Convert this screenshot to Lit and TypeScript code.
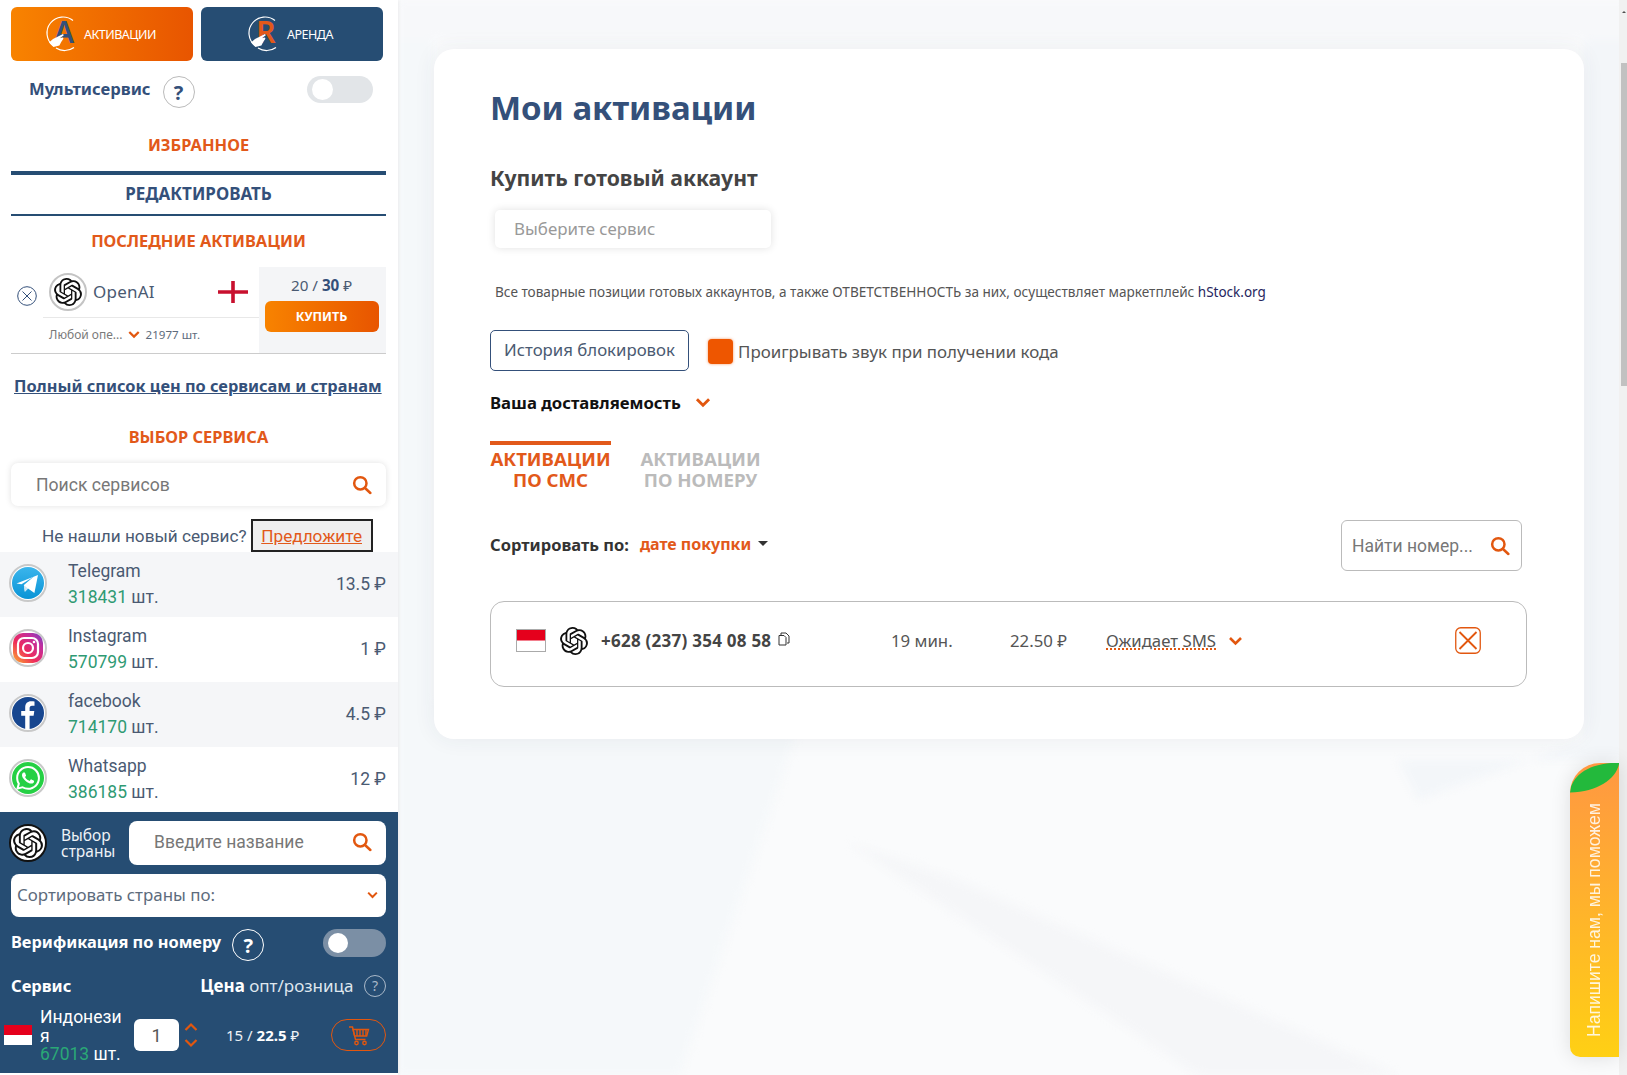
import { LitElement, html, svg, css } from "lit";
import { customElement } from "lit/decorators.js";

const gpt = svg`<path d="M22.2819 9.8211a5.9847 5.9847 0 0 0-.5157-4.9108 6.0462 6.0462 0 0 0-6.5098-2.9A6.0651 6.0651 0 0 0 4.9807 4.1818a5.9847 5.9847 0 0 0-3.9977 2.9 6.0462 6.0462 0 0 0 .7427 7.0966 5.98 5.98 0 0 0 .511 4.9107 6.051 6.051 0 0 0 6.5146 2.9001A5.9847 5.9847 0 0 0 13.2599 24a6.0557 6.0557 0 0 0 5.7718-4.2058 5.9894 5.9894 0 0 0 3.9977-2.9001 6.0557 6.0557 0 0 0-.7475-7.0729zm-9.022 12.6081a4.4755 4.4755 0 0 1-2.8764-1.0408l.1419-.0804 4.7783-2.7582a.7948.7948 0 0 0 .3927-.6813v-6.7369l2.02 1.1686a.071.071 0 0 1 .038.052v5.5826a4.504 4.504 0 0 1-4.4945 4.4944zm-9.6607-4.1254a4.4708 4.4708 0 0 1-.5346-3.0137l.142.0852 4.783 2.7582a.7712.7712 0 0 0 .7806 0l5.8428-3.3685v2.3324a.0804.0804 0 0 1-.0332.0615L9.74 19.9502a4.4992 4.4992 0 0 1-6.1408-1.6464zM2.3408 7.8956a4.485 4.485 0 0 1 2.3655-1.9728V11.6a.7664.7664 0 0 0 .3879.6765l5.8144 3.3543-2.0201 1.1685a.0757.0757 0 0 1-.071 0l-4.8303-2.7865A4.504 4.504 0 0 1 2.3408 7.872zm16.5963 3.8558L13.1038 8.364 15.1192 7.2a.0757.0757 0 0 1 .071 0l4.8303 2.7913a4.4944 4.4944 0 0 1-.6765 8.1042v-5.6772a.79.79 0 0 0-.407-.667zm2.0107-3.0231l-.142-.0852-4.7735-2.7818a.7759.7759 0 0 0-.7854 0L9.409 9.2297V6.8974a.0662.0662 0 0 1 .0284-.0615l4.8303-2.7866a4.4992 4.4992 0 0 1 6.6802 4.66zM8.3065 12.863l-2.02-1.1638a.0804.0804 0 0 1-.038-.0567V6.0742a4.4992 4.4992 0 0 1 7.3757-3.4537l-.142.0805L8.704 5.459a.7948.7948 0 0 0-.3927.6813zm1.0976-2.3654l2.602-1.4998 2.6069 1.4998v2.9994l-2.5974 1.4997-2.6067-1.4997Z"/>`;

const gptIcon = () => html`<svg viewBox="0 0 24 24" fill="#111">${gpt}</svg>`;
const search = html`<svg class="search" viewBox="0 0 24 24" fill="none" stroke="#e2570f" stroke-width="3" stroke-linecap="round"><circle cx="10" cy="10" r="7.4"/><path d="M15.6 15.6 22 21.6"/></svg>`;
const chev = () => html`<svg class="chev" viewBox="0 0 14 10" fill="none" stroke="#e2570f" stroke-width="2.6"><path d="M1.5 2 7 7.5 12.5 2"/></svg>`;
const flag = html`<svg class="flag" viewBox="0 0 30 23" preserveAspectRatio="none"><rect width="30" height="23" fill="#fff"/><rect width="30" height="11.5" fill="#e5001c"/></svg>`;
const tabLogo = (letter: string, color: string) => html`<svg class="tablogo" viewBox="0 0 34 34">
  <path d="M27 3.5A16 16 0 0 0 7 28.5" fill="none" stroke="#fff" stroke-width="1.2"/>
  <path d="M10 31A16 16 0 0 0 28 30.5" fill="none" stroke="#fff" stroke-width="1.2"/>
  <text class="tabletter" x="18" y="26" text-anchor="middle" fill=${color}>${letter}</text>
  <path d="M3 25.5 7 22l3-1.5 7-3.5 .8 1.2-4 3 3.2-.6.4 1.2-2.2 3.2-1.8 3.6-6 1.4Z" fill="#fff"/>
</svg>`;

interface Svc { name: string; count: string; price: string; icon: unknown; }
const services: Svc[] = [
  { name: "Telegram", count: "318431", price: "13.5", icon: html`<svg class="svc" viewBox="0 0 38 38"><defs><linearGradient id="tg" x1="0" y1="0" x2="0" y2="1"><stop offset="0" stop-color="#3bb5ec"/><stop offset="1" stop-color="#0a94d6"/></linearGradient></defs><circle cx="19" cy="19" r="18" fill="#fff" stroke="#c9c9c9" stroke-width="2"/><circle cx="19" cy="19" r="16" fill="url(#tg)"/><path d="M7.5 19.5 29 11l-3.6 18-6.4-4.6-3.2 3-.9-6.4 10-8.4-12.4 7.6Z" fill="#fff"/><path d="m14.9 21.2 1 6.8 3.1-3.6Z" fill="#c9e6f5"/></svg>` },
  { name: "Instagram", count: "570799", price: "1", icon: html`<svg class="svc" viewBox="0 0 38 38"><defs><linearGradient id="ig" x1="0" y1="1" x2="1" y2="0"><stop offset="0" stop-color="#fdb32b"/><stop offset=".4" stop-color="#ee2a5c"/><stop offset=".75" stop-color="#c22f9e"/><stop offset="1" stop-color="#6a45c6"/></linearGradient></defs><circle cx="19" cy="19" r="18" fill="#fff" stroke="#c9c9c9" stroke-width="2"/><rect x="4" y="4" width="30" height="30" rx="10" fill="url(#ig)"/><rect x="9" y="9" width="20" height="20" rx="6" fill="none" stroke="#fff" stroke-width="2.2"/><circle cx="19" cy="19" r="5" fill="none" stroke="#fff" stroke-width="2.2"/><circle cx="25" cy="13" r="1.3" fill="#fff"/></svg>` },
  { name: "facebook", count: "714170", price: "4.5", icon: html`<svg class="svc" viewBox="0 0 38 38"><circle cx="19" cy="19" r="18" fill="#fff" stroke="#c9c9c9" stroke-width="2"/><circle cx="19" cy="19" r="16" fill="#17468f"/><path d="M20.6 35V21.8h4l.7-4.8h-4.7v-2.800c0-1.500.7-2.400 2.400-2.400h2.500V7.600c-.9-.1-2-.3-3.400-.3-3.600 0-5.900 2.200-5.900 6.200V17h-4v4.800h4V35Z" fill="#fff"/></svg>` },
  { name: "Whatsapp", count: "386185", price: "12", icon: html`<svg class="svc" viewBox="0 0 38 38"><circle cx="19" cy="19" r="18" fill="#fff" stroke="#c9c9c9" stroke-width="2"/><circle cx="19" cy="19" r="16" fill="#25d044"/><g transform="translate(7 7)" fill="#fff"><path d="M17.472 14.382c-.297-.149-1.758-.867-2.03-.967-.273-.099-.471-.148-.67.15-.197.297-.767.966-.94 1.164-.173.199-.347.223-.644.075-.297-.15-1.255-.463-2.39-1.475-.883-.788-1.48-1.761-1.653-2.059-.173-.297-.018-.458.13-.606.134-.133.298-.347.446-.52.149-.174.198-.298.298-.497.099-.198.05-.371-.025-.52-.075-.149-.669-1.612-.916-2.207-.242-.579-.487-.5-.669-.51-.173-.008-.371-.01-.57-.01-.198 0-.52.074-.792.372-.272.297-1.04 1.016-1.04 2.479 0 1.462 1.065 2.875 1.213 3.074.149.198 2.096 3.2 5.077 4.487.709.306 1.262.489 1.694.625.712.227 1.36.195 1.871.118.571-.085 1.758-.719 2.006-1.413.248-.694.248-1.289.173-1.413-.074-.124-.272-.198-.57-.347m-5.421 7.403h-.004a9.87 9.87 0 01-5.031-1.378l-.361-.214-3.741.982.998-3.648-.235-.374a9.86 9.86 0 01-1.51-5.26c.001-5.45 4.436-9.884 9.888-9.884 2.64 0 5.122 1.03 6.988 2.898a9.825 9.825 0 012.893 6.994c-.003 5.45-4.437 9.884-9.885 9.884m8.413-18.297A11.815 11.815 0 0012.05 0C5.495 0 .16 5.335.157 11.892c0 2.096.547 4.142 1.588 5.945L.057 24l6.305-1.654a11.882 11.882 0 005.683 1.448h.005c6.554 0 11.89-5.335 11.893-11.893a11.821 11.821 0 00-3.48-8.413Z"/></g></svg>` },
];

@customElement("app-root")
export class AppRoot extends LitElement {
  static styles = css`
    :host { display: block; width: 1627px; height: 1075px; overflow: hidden; position: relative; background: #fafbfc; color: #34507a; font-family: "Noto Sans", sans-serif; }
    * { box-sizing: border-box; }
    .page { display: flex; height: 1075px; position: relative; }

    /* background decoration */
    .bg { position: absolute; left: 398px; top: 0; width: 1229px; height: 1075px; filter: blur(4px); }

    /* sidebar */
    .side { position: relative; width: 398px; height: 1075px; background: #fff; flex: none; display: flex; flex-direction: column; box-shadow: 1px 0 3px rgba(0,0,0,.06); }
    .tabs { display: flex; gap: 8px; padding: 7px 0 0 11px; }
    .tab { width: 182px; height: 54px; border-radius: 6px; display: flex; align-items: center; color: #fff; font-size: 12.5px; letter-spacing: -.5px; }
    .tab.a { background: linear-gradient(90deg, #f88300, #e85500); padding-left: 35px; gap: 4px; }
    .tab.b { background: #264d73; padding-left: 47px; gap: 5px; }
    .tablogo { width: 34px; height: 34px; flex: none; overflow: visible; }
    .tabletter { font-family: "Noto Sans", sans-serif; font-weight: 600; font-size: 30px; letter-spacing: 0; }

    .multi { display: flex; margin: 15px 25px 0 29px; height: 32px; }
    .multi b { font-size: 16.6px; font-weight: 700; color: #34507a; line-height: 26px; }
    .q { width: 32px; height: 32px; border-radius: 50%; border: 1px solid #bbb; display: flex; align-items: center; justify-content: center; font-weight: 700; font-size: 20px; color: #34507a; margin-left: 12px; background: #fff; flex: none; }
    .tog { margin-left: auto; width: 66px; height: 27px; border-radius: 14px; background: #e2e5e8; padding: 3px 5px; }
    .tog i { display: block; width: 21px; height: 21px; border-radius: 50%; background: #fff; }

    .sect { height: 24px; line-height: 24px; text-align: center; font-weight: 700; font-size: 16.4px; color: #e2591a; width: 375px; margin-left: 11px; }
    .fav { margin-top: 25px; }
    .edit { margin: 14px 0 0 11px; width: 375px; height: 45px; border-top: 4px solid #264d73; border-bottom: 2px solid #264d73; text-align: center; font-weight: 700; font-size: 17px; color: #34507a; line-height: 38px; }
    .last { margin-top: 13px; }

    .recent { margin: 14px 0 0 11px; width: 375px; height: 87px; border-bottom: 1px solid #ccc; display: flex; }
    .rleft { flex: 1; display: flex; flex-direction: column; }
    .rtop { height: 51px; margin-left: 32px; padding-left: 6px; border-bottom: 1px solid #e8e8e8; display: flex; align-items: center; position: relative; }
    .xc { position: absolute; left: -26px; top: 19px; width: 20px; height: 20px; }
    .logo38 { width: 38px; height: 38px; border-radius: 50%; border: 2px solid #c4c4c4; background: #fff; display: flex; align-items: center; justify-content: center; flex: none; }
    .logo38 svg { width: 28px; height: 28px; }
    .rname { margin-left: 6px; font-size: 17px; color: #4a5a72; letter-spacing: .2px; padding-bottom: 2px; }
    .eng { margin-left: 63px; width: 30px; height: 22px; flex: none; }
    .rbot { display: flex; align-items: center; margin-left: 38px; height: 35px; font-size: 11.6px; color: #5d6b7c; padding-bottom: 2px; }
    .rbot .op { color: #7a7a7a; font-size: 12px; }
    .rbot .chev { margin: 0 6px 0 5px; }
    .chev { width: 12px; height: 9px; }
    .rright { width: 127px; background: #f4f5f7; display: flex; flex-direction: column; align-items: center; padding-right: 2px; }
    .rprice { height: 34px; line-height: 36px; font-size: 15.2px; color: #4a5a72; }
    .rprice b { color: #34507a; }
    .buy { width: 114px; height: 31px; border-radius: 6px; background: linear-gradient(90deg, #f88300, #e85500); color: #fff; font-weight: 700; font-size: 12.5px; display: flex; align-items: center; justify-content: center; }

    .fulllink { margin: 20px 0 0 14px; width: 372px; height: 24px; line-height: 24px; font-weight: 700; font-size: 16.35px; color: #34507a; text-decoration: underline; white-space: nowrap; }
    .choose { margin-top: 27px; }
    .sbox { margin: 14px 0 0 11px; width: 375px; height: 43px; border-radius: 7px; background: #fff; box-shadow: 0 0 6px rgba(0,0,0,.12); display: flex; align-items: center; justify-content: space-between; padding: 0 14px 0 25px; font-family: Roboto, sans-serif; font-size: 17.6px; color: #777; }
    .search { width: 20px; height: 20px; flex: none; }
    .suggest { margin: 13px 0 0 42px; height: 33px; display: flex; align-items: center; font-family: Roboto, sans-serif; font-size: 17.2px; color: #4a5a72; white-space: nowrap; }
    .sugbtn { margin-left: 4px; width: 122px; height: 33px; border: 2px solid #222; background: #efefef; color: #e2591a; text-decoration: underline; display: flex; align-items: center; justify-content: center; }

    .list { display: flex; flex-direction: column; }
    .row { height: 65px; display: flex; align-items: center; padding: 0 12px 3px 9px; font-family: Roboto, sans-serif; font-size: 17.5px; color: #4a5a72; }
    .row:nth-child(odd) { background: #f5f6f8; }
    .svc { width: 38px; height: 38px; flex: none; }
    .sinfo { margin-left: 21px; padding-top: 2px; line-height: 26px; flex: 1; }
    .sinfo em { font-style: normal; color: #2f9a73; }
    .sp { padding-top: 1px; }

    .panel { height: 261px; background: #264d73; color: #fff; display: flex; flex-direction: column; padding: 9px 12px 0 11px; }
    .p1 { display: flex; height: 44px; align-items: center; margin-left: -2px; }
    .wlogo { width: 38px; height: 38px; border-radius: 50%; background: #fff; border: 2px solid #111; box-shadow: inset 0 0 0 1px #fff; display: flex; align-items: center; justify-content: center; flex: none; }
    .wlogo svg { width: 30px; height: 30px; }
    .plabel { margin-left: 14px; font-size: 15.5px; line-height: 16px; width: 68px; color: #eef2f6; }
    .pinput { flex: 1; height: 44px; background: #fff; border-radius: 8px; display: flex; align-items: center; justify-content: space-between; padding: 0 14px 2px 25px; font-family: Roboto, sans-serif; font-size: 17.5px; color: #777; }
    .psel { margin-top: 9px; height: 43px; background: #fff; border-radius: 8px; display: flex; align-items: center; justify-content: space-between; padding: 0 8px 2px 6px; font-size: 16.9px; color: #5d6b7c; }
    .psel .chev { width: 11px; height: 8px; }
    .verify { margin-top: 12px; height: 32px; display: flex; }
    .verify b { font-size: 16.4px; line-height: 26px; font-weight: 700; }
    .verify .q { background: transparent; color: #fff; border-color: #fff; margin-left: 11px; }
    .vtog { margin-left: auto; width: 63px; height: 28px; border-radius: 14px; background: #7b8fa5; padding: 4px 5px; }
    .vtog i { display: block; width: 20px; height: 20px; border-radius: 50%; background: #fff; }
    .phead { margin-top: 12px; height: 25px; display: flex; align-items: center; font-size: 16.5px; }
    .phead b { font-weight: 700; }
    .phead .pr { margin-left: 129px; white-space: nowrap; color: #dfe6ee; font-size: 17px; }
    .phead .pr b { color: #fff; }
    .q2 { margin-left: auto; width: 22px; height: 22px; border-radius: 50%; border: 1px solid #aab9c9; color: #aab9c9; font-size: 14px; display: flex; align-items: center; justify-content: center; flex: none; }
    .prow { margin: 9px 0 0 -7px; display: flex; align-items: center; height: 56px; }
    .prow .flag { width: 28px; height: 20px; flex: none; }
    .pname { margin-left: 8px; padding-top: 2px; width: 86px; font-family: Roboto, sans-serif; font-size: 17.5px; line-height: 18.500px; word-break: break-all; color: #fff; }
    .pname em { font-style: normal; color: #2aa876; }
    .num { margin-left: 8px; width: 45px; height: 32px; border-radius: 6px; background: #fff; color: #555; font-family: Roboto, sans-serif; font-size: 18px; display: flex; align-items: center; justify-content: center; flex: none; }
    .arrows { margin-left: 5px; width: 14px; height: 32px; flex: none; }
    .pprice { margin-left: 28px; font-size: 15px; width: 105px; white-space: nowrap; color: #eef2f6; }
    .pprice b { color: #fff; }
    .cart { width: 55px; height: 32px; border: 1.5px solid #e2570f; border-radius: 16px; display: flex; align-items: center; justify-content: center; flex: none; }
    .cart svg { width: 22px; height: 21px; }

    /* main */
    .main { flex: 1; position: relative; padding: 49px 35px 0 36px; }
    .card { height: 690px; background: #fff; border-radius: 20px; box-shadow: 0 0 22px rgba(40,60,90,.07); padding: 37px 57px 0 56px; display: flex; flex-direction: column; }
    h1 { margin: 0; height: 44px; line-height: 44px; font-size: 33px; font-weight: 700; color: #34507a; }
    h2 { margin: 34px 0 0; height: 28px; line-height: 28px; font-size: 21.2px; font-weight: 700; color: #444; }
    .acc { margin: 18px 0 0 5px; width: 276px; height: 38px; border-radius: 5px; background: #fff; box-shadow: 0 0 8px rgba(0,0,0,.12); padding: 0 0 2px 19px; display: flex; align-items: center; font-size: 16.9px; color: #999; }
    .note { margin: 34px 0 0 5px; height: 20px; line-height: 20px; font-size: 13.6px; color: #555; white-space: nowrap; }
    .note span { color: #26265e; font-size: 13.5px; }
    .acts { margin-top: 28px; height: 41px; display: flex; align-items: center; }
    .hist { width: 199px; height: 41px; border: 1px solid #34507a; border-radius: 5px; padding-bottom: 2px; display: flex; align-items: center; justify-content: center; font-size: 16.8px; color: #4a5a72; }
    .cb { margin: 2px 0 0 19px; width: 25px; height: 25px; border-radius: 4px; background: #ee5600; box-shadow: 0 0 3px rgba(238,86,0,.6); flex: none; }
    .cbl { margin-left: 5px; font-size: 16.9px; color: #555; padding-top: 2px; white-space: nowrap; }
    .deliv { margin-top: 20px; height: 22px; display: flex; align-items: center; font-size: 16.700px; font-weight: 700; color: #111; }
    .deliv .chev { width: 16px; height: 11px; margin: 0 0 0 14px; }
    .mtabs { margin-top: 28px; display: flex; gap: 29px; height: 50px; }
    .mtab { width: 121px; border-top: 4px solid transparent; padding-top: 3px; text-align: center; font-size: 18.6px; font-weight: 700; line-height: 21px; color: #bbb; }
    .mtab.on { border-top-color: #e2591a; color: #e2591a; }
    .sort { margin-top: 29px; height: 51px; display: flex; align-items: center; margin-right: 5px; font-size: 16.5px; font-weight: 700; color: #333; }
    .sort .by { padding-bottom: 3px; }
    .sort .dt { color: #e2591a; margin-left: 11px; font-size: 16px; padding-bottom: 3px; }
    .caret { width: 0; height: 0; margin: 0 0 4px 7px; border: 5px solid transparent; border-top-color: #333; border-bottom: 0; }
    .find { margin-left: auto; width: 181px; height: 51px; border: 1px solid #bbb; border-radius: 6px; display: flex; align-items: center; justify-content: space-between; padding: 0 11px 0 10px; font-family: Roboto, sans-serif; font-weight: 400; font-size: 17.5px; color: #777; white-space: nowrap; }
    .item { margin-top: 30px; height: 86px; border: 1px solid #bbb; border-radius: 14px; display: flex; align-items: center; padding: 0 0 7px 25px; font-size: 16.8px; color: #555; }
    .i1 { width: 44px; }
    .item .flag { display: block; width: 30px; height: 23px; border: 1px solid #aaa; }
    .i2 { width: 41px; }
    .i2 svg { display: block; width: 28px; height: 28px; }
    .i3 { width: 290px; display: flex; align-items: center; font-weight: 700; font-size: 17px; letter-spacing: .25px; color: #444; }
    .copy { width: 13px; height: 14px; margin: -4px 0 0 7px; flex: none; }
    .i4 { width: 119px; }
    .i5 { width: 96px; }
    .i6 { width: 349px; display: flex; align-items: center; }
    .i6 u { text-decoration: underline dotted #e2570f 2px; }
    .i6 .chev { width: 15px; height: 10px; margin: 1px 0 0 12px; }
    .xbtn { width: 26px; height: 27px; display: block; }

    /* scrollbar */
    .sb { width: 8px; background: #f1f1f1; flex: none; position: relative; }
    .sb i { position: absolute; left: 2px; right: 0; top: 63px; height: 323px; background: #c1c1c1; }
    .sb b { position: absolute; left: 3px; top: 11px; border: 2.500px solid transparent; border-bottom-color: #505050; border-top: 0; }

    /* chat widget */
    .chat { position: absolute; right: 8px; top: 763px; width: 49px; height: 294px; border-radius: 30px 0 0 10px; background: linear-gradient(180deg, #ff9742, #ffd014); box-shadow: 0 0 20px rgba(0,0,0,.12); display: flex; justify-content: center; padding-top: 38px; overflow: hidden; }
    .chat svg { position: absolute; left: 0; top: 0; width: 49px; height: 30px; }
    .chat span { writing-mode: vertical-rl; transform: rotate(180deg); font-family: "Liberation Sans", sans-serif; font-size: 17.600px; color: rgba(255,255,255,.85); white-space: pre; height: 236px; text-align: left; }
  `;

  render() {
    return html`<div class="page">
      <svg class="bg" viewBox="0 0 1229 1075" preserveAspectRatio="none">
        <polygon points="0,0 36,0 36,700 410,700 282,1075 0,1075" fill="#f5f8fa"/>
        <polygon points="451,843 560,880 1000,1075 800,1075" fill="#f5f6f8"/>
        <polygon points="1186,0 1229,0 1229,760 1000,760 1020,800 1186,740" fill="#f3f6f9"/>
        <polygon points="0,0 1229,0 1229,40 0,40" fill="#f7f8fa"/>
      </svg>
      <aside class="side">
        <div class="tabs">
          <div class="tab a">${tabLogo("A", "#34507a")}<span>АКТИВАЦИИ</span></div>
          <div class="tab b">${tabLogo("R", "#e2591a")}<span>АРЕНДА</span></div>
        </div>
        <div class="multi"><b>Мультисервис</b><div class="q">?</div><div class="tog"><i></i></div></div>
        <div class="sect fav">ИЗБРАННОЕ</div>
        <div class="edit">РЕДАКТИРОВАТЬ</div>
        <div class="sect last">ПОСЛЕДНИЕ АКТИВАЦИИ</div>
        <div class="recent">
          <div class="rleft">
            <div class="rtop">
              <svg class="xc" viewBox="0 0 20 20" fill="none" stroke="#34507a" stroke-width="1"><circle cx="10" cy="10" r="9.3"/><path d="m5.5 5.5 9 9m0-9-9 9"/></svg>
              <div class="logo38">${gptIcon()}</div>
              <span class="rname">OpenAI</span>
              <svg class="eng" viewBox="0 0 30 22"><rect width="30" height="22" fill="#fff"/><path d="M0 11h30M15 0v22" stroke="#c8102e" stroke-width="3.6"/></svg>
            </div>
            <div class="rbot"><span class="op">Любой опе...</span>${chev()}<span>21977 шт.</span></div>
          </div>
          <div class="rright">
            <div class="rprice">20 / <b>30</b> ₽</div>
            <div class="buy">КУПИТЬ</div>
          </div>
        </div>
        <div class="fulllink">Полный список цен по сервисам и странам</div>
        <div class="sect choose">ВЫБОР СЕРВИСА</div>
        <div class="sbox"><span>Поиск сервисов</span>${search}</div>
        <div class="suggest">Не нашли новый сервис?<div class="sugbtn">Предложите</div></div>
        <div class="list">
          ${services.map((s) => html`<div class="row">${s.icon}
            <div class="sinfo">${s.name}<br><em>${s.count}</em> шт.</div>
            <div class="sp">${s.price} ₽</div></div>`)}
        </div>
        <div class="panel">
          <div class="p1">
            <div class="wlogo">${gptIcon()}</div>
            <div class="plabel">Выбор страны</div>
            <div class="pinput"><span>Введите название</span>${search}</div>
          </div>
          <div class="psel"><span>Сортировать страны по:</span>${chev()}</div>
          <div class="verify"><b>Верификация по номеру</b><div class="q">?</div><div class="vtog"><i></i></div></div>
          <div class="phead"><b>Сервис</b><div class="pr"><b>Цена</b> опт/розница</div><div class="q2">?</div></div>
          <div class="prow">
            ${flag}
            <div class="pname">Индонезия<br><em>67013</em> шт.</div>
            <div class="num">1</div>
            <svg class="arrows" viewBox="0 0 14 32" fill="none" stroke="#e2570f" stroke-width="2.2"><path d="m1.5 11 5.5-5.500 5.500 5.500M1.500 21l5.500 5.500 5.500-5.500"/></svg>
            <div class="pprice">15 / <b>22.5</b> ₽</div>
            <div class="cart"><svg viewBox="0 0 22 21" fill="none" stroke="#e2570f" stroke-width="1.4"><path d="M1 2h3.500l3 12.500h10"/><path d="M5 4.500h15.500l-1.800 6.500H6.600z"/><path d="M9 5v6m3-6v6m3-6v6m3-6v6"/><circle cx="8.500" cy="18" r="1.700"/><circle cx="16.500" cy="18" r="1.700"/></svg></div>
          </div>
        </div>
      </aside>
      <main class="main">
        <section class="card">
          <h1>Мои активации</h1>
          <h2>Купить готовый аккаунт</h2>
          <div class="acc">Выберите сервис</div>
          <div class="note">Все товарные позиции готовых аккаунтов, а также ОТВЕТСТВЕННОСТЬ за них, осуществляет маркетплейс <span>hStock.org</span></div>
          <div class="acts"><div class="hist">История блокировок</div><div class="cb"></div><div class="cbl">Проигрывать звук при получении кода</div></div>
          <div class="deliv">Ваша доставляемость${chev()}</div>
          <div class="mtabs"><div class="mtab on">АКТИВАЦИИ<br>ПО СМС</div><div class="mtab">АКТИВАЦИИ<br>ПО НОМЕРУ</div></div>
          <div class="sort"><span class="by">Сортировать по:</span><span class="dt">дате покупки</span><div class="caret"></div><div class="find"><span>Найти номер...</span>${search}</div></div>
          <div class="item">
            <div class="i1">${flag}</div>
            <div class="i2">${gptIcon()}</div>
            <div class="i3">+628 (237) 354 08 58<svg class="copy" viewBox="0 0 13 14" fill="none" stroke="#333" stroke-width="1"><path d="M3 3V1h5l3 3v7H9"/><path d="M1 3.500h5l2 2V13H1Z"/></svg></div>
            <div class="i4">19 мин.</div>
            <div class="i5">22.50 ₽</div>
            <div class="i6"><u>Ожидает SMS</u>${chev()}</div>
            <svg class="xbtn" viewBox="0 0 26 27" fill="none" stroke="#e2570f"><rect x=".75" y=".75" width="24.500" height="25.500" rx="5" stroke-width="1.300"/><path d="m4.500 5 17 17m0-17-17 17" stroke-width="1.800"/></svg>
          </div>
        </section>
      </main>
      <div class="sb"><b></b><i></i></div>
      <div class="chat">
        <svg viewBox="0 0 49 30"><path d="M0 29.500C1 14 16 2 41 0h8v1C46 16 27 29 0 29.500Z" fill="#23b93c"/></svg>
        <span>Напишите нам, мы поможем</span>
      </div>
    </div>`;
  }
}
